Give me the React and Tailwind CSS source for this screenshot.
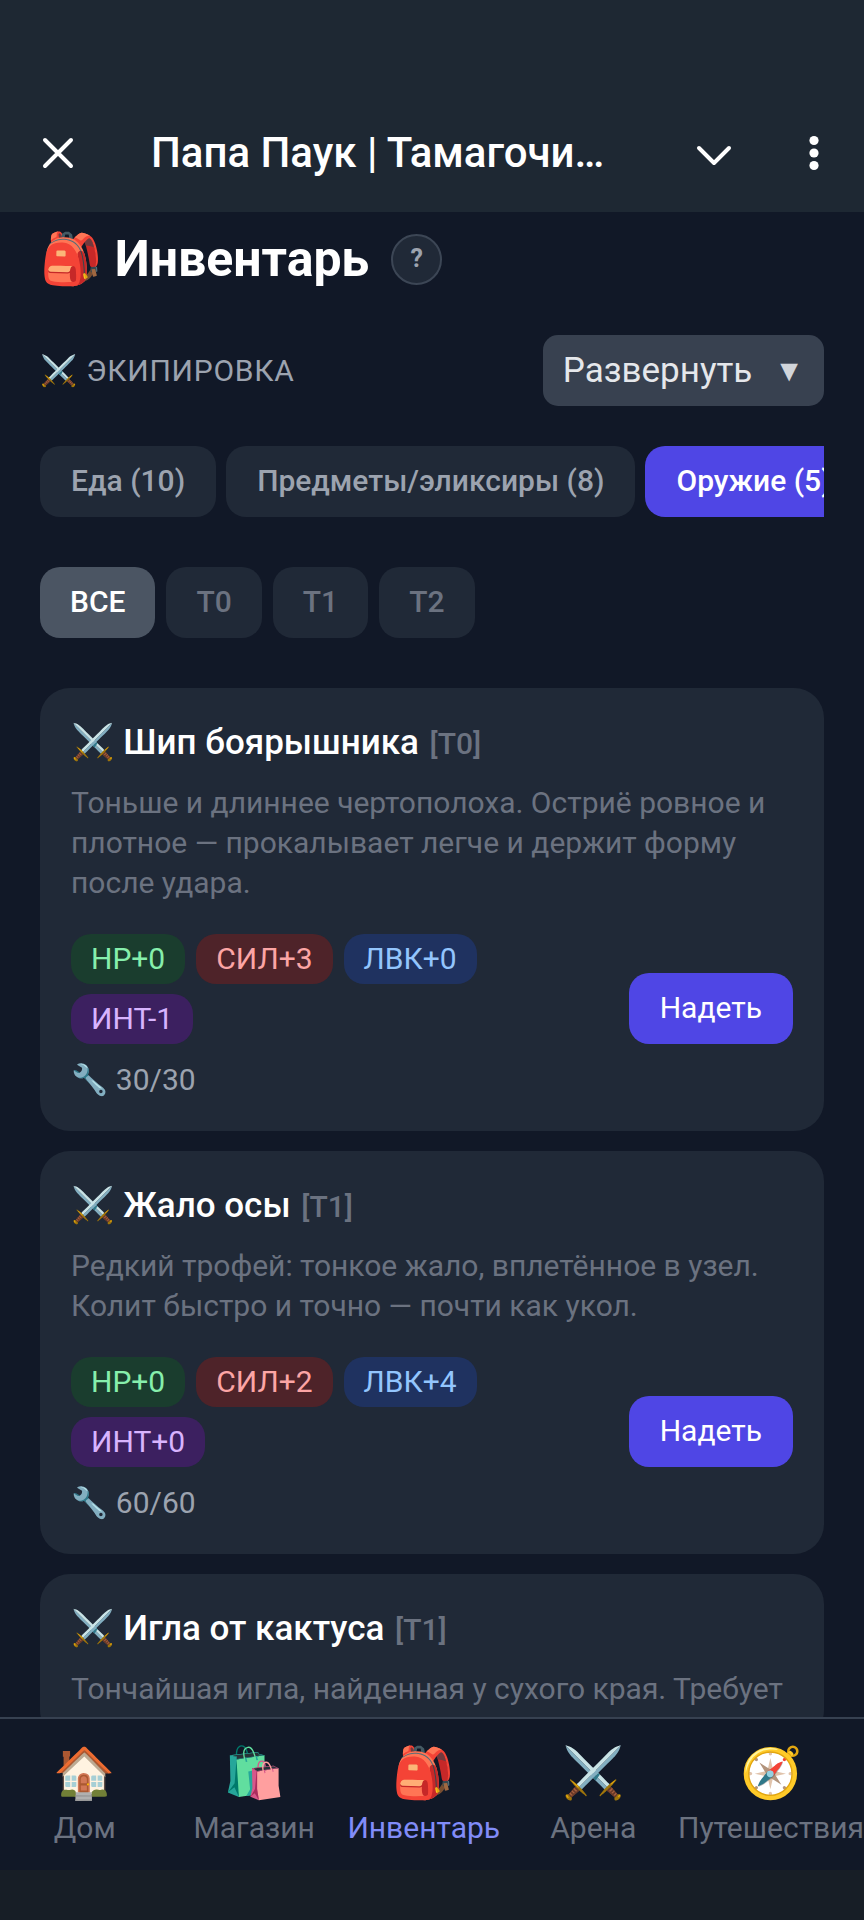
import { useState } from "react";

const tabs = [
  { id: "food", label: "Еда", count: 10 },
  { id: "items", label: "Предметы/эликсиры", count: 8 },
  { id: "weapons", label: "Оружие", count: 5 },
];

const tiers = ["ВСЕ", "T0", "T1", "T2"];

const weapons = [
  {
    name: "Шип боярышника",
    tier: "T0",
    text: "Тоньше и длиннее чертополоха. Остриё ровное и плотное — прокалывает легче и держит форму после удара.",
    stats: { hp: "HP+0", str: "СИЛ+3", agi: "ЛВК+0", int: "ИНТ-1" },
    durability: "30/30",
  },
  {
    name: "Жало осы",
    tier: "T1",
    text: "Редкий трофей: тонкое жало, вплетённое в узел. Колит быстро и точно — почти как укол.",
    stats: { hp: "HP+0", str: "СИЛ+2", agi: "ЛВК+4", int: "ИНТ+0" },
    durability: "60/60",
  },
  {
    name: "Игла от кактуса",
    tier: "T1",
    text: "Тончайшая игла, найденная у сухого края. Требует",
  },
];

const nav = [
  { icon: "🏠", label: "Дом" },
  { icon: "🛍️", label: "Магазин" },
  { icon: "🎒", label: "Инвентарь", active: true },
  { icon: "⚔️", label: "Арена" },
  { icon: "🧭", label: "Путешествия" },
];

const statColors = {
  hp: "bg-[#1a3d2e] text-[#86efac]",
  str: "bg-[#4e2329] text-[#fca5a5]",
  agi: "bg-[#1f3260] text-[#93c5fd]",
  int: "bg-[#3c2060] text-[#d8b4fe]",
};

function TopBar() {
  return (
    <header className="flex shrink-0 items-center bg-[#1e2833] pt-[94px] pr-[30px] pl-10 text-white">
      <button aria-label="Закрыть" className="flex h-[118px] items-center">
        <svg viewBox="0 0 36 36" className="size-9" fill="none" stroke="currentColor" strokeWidth="4" strokeLinecap="round">
          <path d="M5 5 31 31M31 5 5 31" />
        </svg>
      </button>
      <p className="ml-[75px] flex-1 truncate text-[42px] leading-[60px] font-medium">Папа Паук | Тамагочи…</p>
      <button aria-label="Свернуть" className="flex h-[118px] items-center">
        <svg viewBox="0 0 40 40" className="size-10" fill="none" stroke="currentColor" strokeWidth="4" strokeLinecap="round" strokeLinejoin="round">
          <path d="M5 15 20 30 35 15" />
        </svg>
      </button>
      <button aria-label="Меню" className="ml-[60px] flex h-[118px] items-center">
        <svg viewBox="0 0 40 40" className="size-10" fill="currentColor">
          <circle cx="20" cy="7.5" r="4.6" />
          <circle cx="20" cy="20" r="4.6" />
          <circle cx="20" cy="32.5" r="4.6" />
        </svg>
      </button>
    </header>
  );
}

function WeaponCard({ item }) {
  return (
    <li className="rounded-[30px] bg-[#202937] px-[31px] pt-[30px] pb-[31px]">
      <h2 className="text-[35px] leading-[50px] font-medium text-white">
        ⚔️ {item.name} <span className="ml-0.5 text-[30px] text-[#6b7280]">[{item.tier}]</span>
      </h2>
      <p className="mt-[14px] text-[30px] leading-10 text-[#6b7280]">{item.text}</p>
      {item.stats && (
        <div className="mt-[31px] flex items-end gap-[30px]">
          <div className="flex flex-1 flex-wrap gap-x-[11px] gap-y-[10px]">
            {Object.entries(item.stats).map(([key, value]) => (
              <span key={key} className={`rounded-[20px] px-5 py-[5px] text-[30px] leading-10 ${statColors[key]}`}>
                {value}
              </span>
            ))}
          </div>
          <button className="rounded-[20px] bg-[#4f46e5] px-[31px] pt-[14px] pb-4 text-[30px] leading-[41px] text-white">
            Надеть
          </button>
        </div>
      )}
      {item.durability && (
        <p className="mt-4 text-[30px] leading-10 text-[#9ca3af]">🔧 {item.durability}</p>
      )}
    </li>
  );
}

export default function App() {
  const [tab, setTab] = useState("weapons");
  const [tier, setTier] = useState("ВСЕ");

  return (
    <div className="flex h-screen flex-col bg-[#111827] font-['Roboto','Noto_Color_Emoji',sans-serif]">
      <TopBar />

      <main className="min-h-0 flex-1 overflow-y-auto px-10 pt-3 [scrollbar-width:none]">
        <div className="flex items-center gap-[22px]">
          <h1 className="text-[50px] leading-[70px] font-bold text-white">🎒 Инвентарь</h1>
          <button className="size-[51px] rounded-full border-2 border-[#3c4655] bg-[#202937] text-[25px] font-bold text-[#9ca3af]">
            ?
          </button>
        </div>

        <div className="mt-[41px] flex items-center justify-between">
          <p className="text-[30px] leading-10 tracking-wide text-[#9ca3af] uppercase">⚔️ Экипировка</p>
          <button className="flex items-center rounded-[15px] bg-[#384150] px-5 py-[10px] text-[35px] leading-[51px] text-[#e5e7eb]">
            Развернуть
            <span className="ml-[22px] text-[30px] text-[#d1d5db]">▼</span>
          </button>
        </div>

        <div className="mt-10 flex gap-[10px] overflow-x-auto [scrollbar-width:none]">
          {tabs.map((t) => (
            <button
              key={t.id}
              onClick={() => setTab(t.id)}
              className={`shrink-0 rounded-[20px] px-[31px] pt-[14px] pb-4 text-[30px] leading-[41px] font-medium ${
                tab === t.id ? "bg-[#4f46e5] text-white" : "bg-[#202937] text-[#9ca3af]"
              }`}
            >
              {t.label} ({t.count})
            </button>
          ))}
        </div>

        <div className="mt-[50px] flex gap-[11px]">
          {tiers.map((t) => (
            <button
              key={t}
              onClick={() => setTier(t)}
              className={`rounded-[20px] px-[30px] pt-[14px] pb-4 text-[30px] leading-[41px] font-medium ${
                tier === t ? "bg-[#4b5563] text-white" : "bg-[#202937] text-[#6b7280]"
              }`}
            >
              {t}
            </button>
          ))}
        </div>

        <ul className="mt-[50px] flex flex-col gap-5">
          {weapons.map((item) => (
            <WeaponCard key={item.name} item={item} />
          ))}
        </ul>
      </main>

      <nav className="flex shrink-0 border-t-2 border-[#374151] pt-[19px] pb-[22px]">
        {nav.map((n) => (
          <a
            key={n.label}
            href="#"
            className={`flex flex-1 flex-col items-center ${n.active ? "text-[#818cf8]" : "text-[#6b7280]"}`}
          >
            <span className="text-[50px] leading-[70px]">{n.icon}</span>
            <span className="text-[30px] leading-10">{n.label}</span>
          </a>
        ))}
      </nav>
      <div className="h-[50px] shrink-0 bg-[#171e26]" />
    </div>
  );
}
